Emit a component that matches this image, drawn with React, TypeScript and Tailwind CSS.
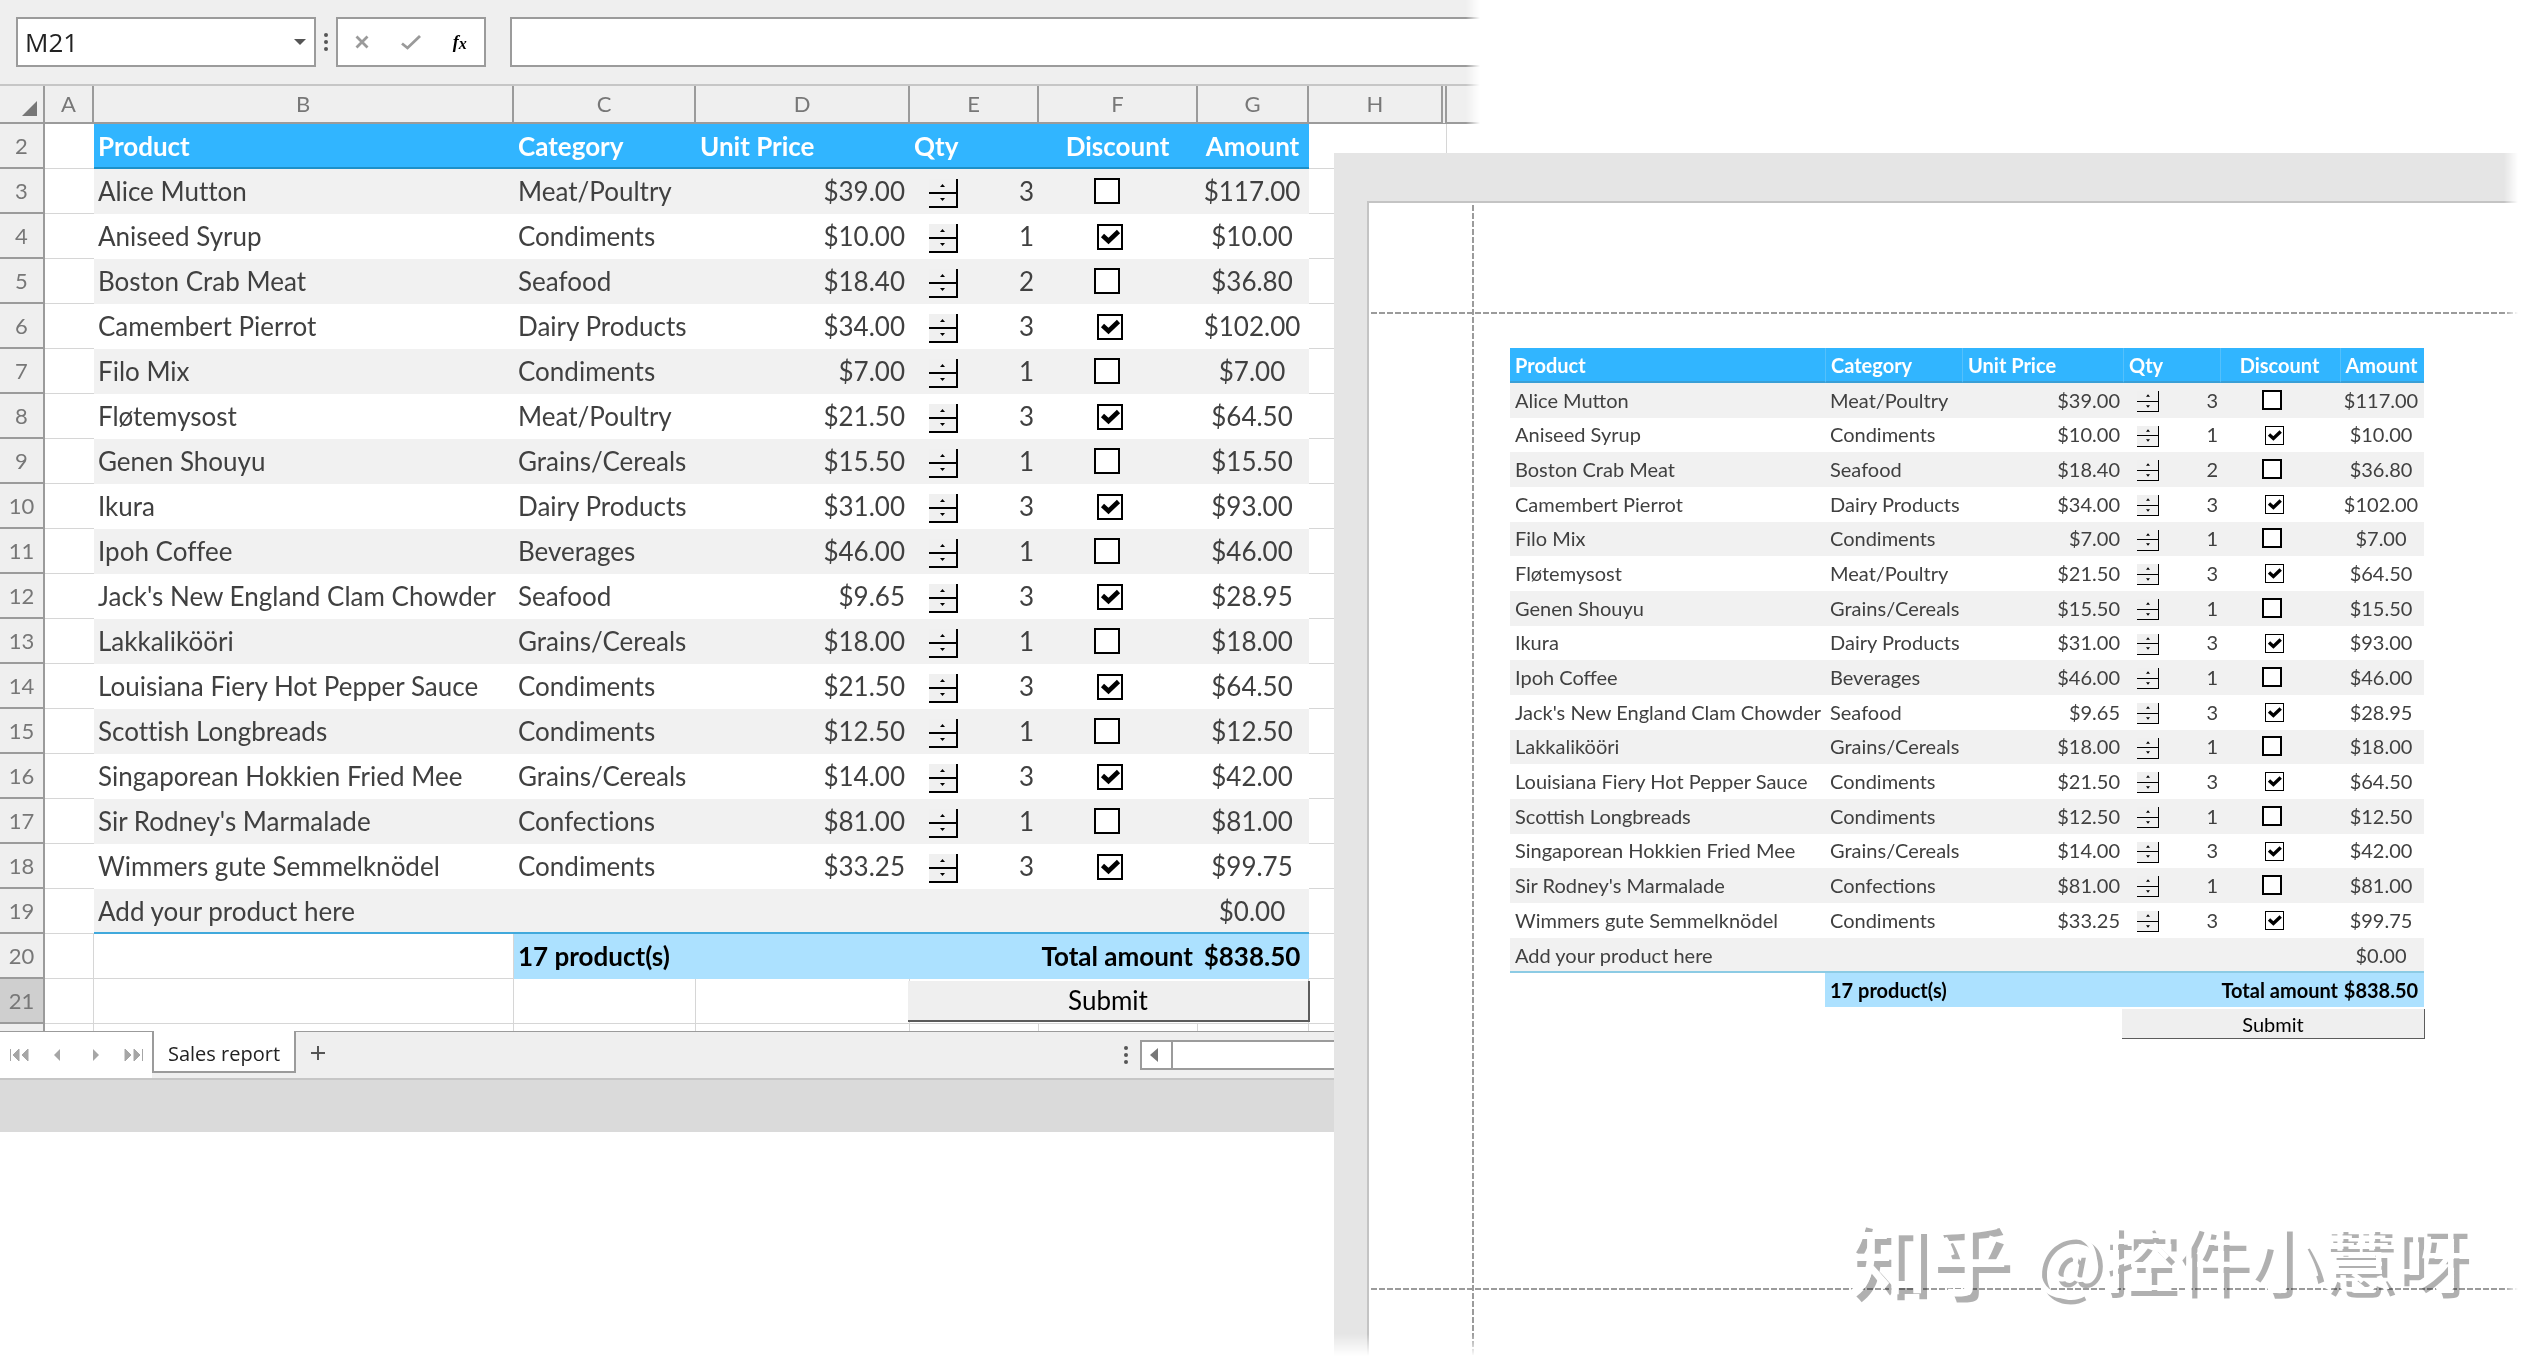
import clsx from "clsx";

type Row = {
  product: string;
  category: string;
  price: string;
  qty: number;
  discount: boolean;
  amount: string;
};

const rows: Row[] = [
  { product: "Alice Mutton", category: "Meat/Poultry", price: "$39.00", qty: 3, discount: false, amount: "$117.00" },
  { product: "Aniseed Syrup", category: "Condiments", price: "$10.00", qty: 1, discount: true, amount: "$10.00" },
  { product: "Boston Crab Meat", category: "Seafood", price: "$18.40", qty: 2, discount: false, amount: "$36.80" },
  { product: "Camembert Pierrot", category: "Dairy Products", price: "$34.00", qty: 3, discount: true, amount: "$102.00" },
  { product: "Filo Mix", category: "Condiments", price: "$7.00", qty: 1, discount: false, amount: "$7.00" },
  { product: "Fløtemysost", category: "Meat/Poultry", price: "$21.50", qty: 3, discount: true, amount: "$64.50" },
  { product: "Genen Shouyu", category: "Grains/Cereals", price: "$15.50", qty: 1, discount: false, amount: "$15.50" },
  { product: "Ikura", category: "Dairy Products", price: "$31.00", qty: 3, discount: true, amount: "$93.00" },
  { product: "Ipoh Coffee", category: "Beverages", price: "$46.00", qty: 1, discount: false, amount: "$46.00" },
  { product: "Jack's New England Clam Chowder", category: "Seafood", price: "$9.65", qty: 3, discount: true, amount: "$28.95" },
  { product: "Lakkalikööri", category: "Grains/Cereals", price: "$18.00", qty: 1, discount: false, amount: "$18.00" },
  { product: "Louisiana Fiery Hot Pepper Sauce", category: "Condiments", price: "$21.50", qty: 3, discount: true, amount: "$64.50" },
  { product: "Scottish Longbreads", category: "Condiments", price: "$12.50", qty: 1, discount: false, amount: "$12.50" },
  { product: "Singaporean Hokkien Fried Mee", category: "Grains/Cereals", price: "$14.00", qty: 3, discount: true, amount: "$42.00" },
  { product: "Sir Rodney's Marmalade", category: "Confections", price: "$81.00", qty: 1, discount: false, amount: "$81.00" },
  { product: "Wimmers gute Semmelknödel", category: "Condiments", price: "$33.25", qty: 3, discount: true, amount: "$99.75" },
];

function Spinner({ name, small }: { name: string; small?: boolean }) {
  return (
    <span
      className={clsx(
        "flex flex-col border-black bg-[#f0f0f0]",
        small ? "mt-1 h-[21px] w-[22px] border-r border-b" : "mt-1.5 h-[29px] w-[29px] border-r-2 border-b-2"
      )}
    >
      <button
        aria-label={`Increase ${name}`}
        className={clsx("flex flex-1 items-center justify-center border-black", small ? "border-b" : "border-b-2")}
      >
        <svg viewBox="0 0 5 3" className={small ? "h-[3px] w-1" : "h-[3px] w-[5px]"}>
          <path d="M0 3L2.5 0L5 3z" />
        </svg>
      </button>
      <button aria-label={`Decrease ${name}`} className="flex flex-1 items-center justify-center">
        <svg viewBox="0 0 5 3" className={small ? "h-[3px] w-1" : "h-[3px] w-[5px]"}>
          <path d="M0 0L2.5 3L5 0z" />
        </svg>
      </button>
    </span>
  );
}

function Discount({ row, small }: { row: Row; small?: boolean }) {
  return (
    <span
      className={clsx(
        "relative block",
        small
          ? row.discount ? "mt-0.5 ml-[45px] size-[19px]" : "ml-[42px] size-5"
          : row.discount ? "mt-0.5 ml-[58px] size-[26px]" : "ml-[55px] size-[26px]"
      )}
    >
      <input
        type="checkbox"
        aria-label={`Discount ${row.product}`}
        defaultChecked={row.discount}
        className={clsx(
          "block size-full appearance-none border-black bg-white",
          small && row.discount ? "border" : "border-2"
        )}
      />
      {row.discount && (
        <svg viewBox="0 0 26 26" className="pointer-events-none absolute inset-0 size-full">
          <path d="M5.5 11.5L11.5 17L21.5 7.5" fill="none" stroke="#000" strokeWidth="4.6" />
        </svg>
      )}
    </span>
  );
}

function Cells({ row, striped, small }: { row: Row; striped: boolean; small?: boolean }) {
  const cell = clsx("pb-0.5", striped ? "bg-[#f1f1f1]" : "bg-white");
  const left = small ? "pl-[5px]" : "pl-1";
  return (
    <>
      <td className={clsx(left, cell)}>{row.product}</td>
      <td className={clsx(left, cell)}>{row.category}</td>
      <td className={clsx("text-right", small ? "pr-[3px]" : "pr-[5px]", cell)}>{row.price}</td>
      <td className={cell}>
        <div className={clsx("flex items-center justify-between", small ? "pr-0.5 pl-3.5" : "pr-[5px] pl-[19px]")}>
          <Spinner name={row.product} small={small} />
          {row.qty}
        </div>
      </td>
      <td className={cell}>
        <Discount row={row} small={small} />
      </td>
      <td className={clsx("text-center", small ? "pr-0.5" : "pr-[3px]", cell)}>{row.amount}</td>
    </>
  );
}

function Heads({ line, left }: { line: string; left: string }) {
  const titles = ["Product", "Category", "Unit Price", "Qty", "Discount", "Amount"];
  return (
    <>
      {titles.map((t, i) => (
        <th
          key={t}
          scope="col"
          className={clsx("border-b-2 bg-[#31b5ff] font-bold text-white", line, i < 4 ? ["text-left", left] : "pr-0.5 text-center")}
        >
          {t}
        </th>
      ))}
    </>
  );
}

function Dots() {
  return (
    <span className="flex w-5 flex-col items-center gap-[3px]">
      <i className="size-1 rounded-full bg-[#555]" />
      <i className="size-1 rounded-full bg-[#555]" />
      <i className="size-1 rounded-full bg-[#555]" />
    </span>
  );
}

function FormulaBar() {
  return (
    <div className="flex h-[86px] items-start border-b-2 border-[#c6c6c6] pt-[17px] pl-4">
      <div className="flex h-[50px] w-[300px] items-center border-2 border-[#9b9b9b] bg-white">
        <input
          aria-label="Name box"
          defaultValue="M21"
          className="min-w-0 flex-1 pl-[7px] font-['Open_Sans',sans-serif] text-[26px] text-[#222] outline-none"
        />
        <button aria-label="Open name list" className="flex h-full w-7 items-center justify-center">
          <svg viewBox="0 0 12 6" className="h-1.5 w-3">
            <path d="M0 0H12L6 6z" fill="#555" />
          </svg>
        </button>
      </div>
      <div className="flex h-[50px] items-center">
        <Dots />
      </div>
      <div className="flex h-[50px] w-[150px] border-2 border-[#9b9b9b] bg-white">
        <button aria-label="Cancel" className="flex flex-1 items-center justify-center">
          <svg viewBox="0 0 14 14" className="size-3.5">
            <path d="M1.5 1.5L12.5 12.5M12.5 1.5L1.5 12.5" stroke="#9a9a9a" strokeWidth="2.8" />
          </svg>
        </button>
        <button aria-label="Enter" className="flex flex-1 items-center justify-center">
          <svg viewBox="0 0 20 15" className="h-[15px] w-5">
            <path d="M1 8.5L6.5 13L19 1" fill="none" stroke="#9a9a9a" strokeWidth="2.8" />
          </svg>
        </button>
        <button
          aria-label="Insert function"
          className="flex flex-1 items-center justify-center font-['Liberation_Serif',serif] text-[18px] leading-none font-bold text-black italic"
        >
          f<span className="pt-1 text-[16px]">x</span>
        </button>
      </div>
      <input aria-label="Formula" className="ml-6 h-[50px] min-w-0 flex-1 border-2 border-r-0 border-[#9b9b9b] bg-white outline-none" />
    </div>
  );
}

function RowHead({ n, active }: { n?: number; active?: boolean }) {
  return (
    <th
      scope="row"
      className={clsx(
        "border-r-2 border-[#9b9b9b] text-center text-[22px] font-normal text-[#777]",
        n && "border-b-2",
        active ? "bg-[#cfcfcf]" : "bg-[#efefef]"
      )}
    >
      {n}
    </th>
  );
}

const gridLine = "border-b border-[#d6d6d6]";
const gridCell = "border-r border-b border-[#d6d6d6]";

function SheetTable() {
  return (
    <table className="w-full table-fixed border-separate border-spacing-0 bg-white text-[26px] leading-8 whitespace-nowrap text-[#404040] [font-variant-ligatures:none]">
      <colgroup>
        <col className="w-[45px]" />
        <col className="w-[49px]" />
        <col className="w-[420px]" />
        <col className="w-[182px]" />
        <col className="w-[214px]" />
        <col className="w-[129px]" />
        <col className="w-[159px]" />
        <col className="w-[111px]" />
        <col className="w-[138px]" />
        <col />
      </colgroup>
      <thead>
        <tr className="h-[38px] bg-[#efefef] text-[22px] leading-7 text-[#777]">
          <th className="border-r-2 border-b-2 border-[#9b9b9b]">
            <svg viewBox="0 0 15 15" className="mt-2 ml-auto mr-1.5 size-[15px]">
              <path d="M15 0V15H0z" fill="#777" />
            </svg>
          </th>
          {"ABCDEFG".split("").map((c) => (
            <th key={c} scope="col" className="border-r-2 border-b-2 border-[#9b9b9b] font-normal">
              {c}
            </th>
          ))}
          <th scope="col" className="border-r-6 border-b-2 border-[#9b9b9b] font-normal [border-right-style:double]">
            H
          </th>
          <th className="border-b-2 border-[#9b9b9b]" />
        </tr>
      </thead>
      <tbody>
        <tr className="h-[45px]">
          <RowHead n={2} />
          <td className={gridLine} />
          <Heads line="border-[#1d90c8]" left="pl-1" />
          <td className={gridCell} />
          <td />
        </tr>
        {rows.map((row, i) => (
          <tr key={row.product} className="h-[45px]">
            <RowHead n={i + 3} />
            <td className={gridLine} />
            <Cells row={row} striped={i % 2 === 0} />
            <td className={gridCell} />
            <td />
          </tr>
        ))}
        <tr className="h-[45px]">
          <RowHead n={19} />
          <td className={gridLine} />
          <td className="border-b-2 border-[#41a9dc] bg-[#f1f1f1] pl-1" colSpan={5}>
            Add your product here
          </td>
          <td className="border-b-2 border-[#41a9dc] bg-[#f1f1f1] pr-[3px] text-center">$0.00</td>
          <td className={gridCell} />
          <td />
        </tr>
        <tr className="h-[45px] font-bold text-black">
          <RowHead n={20} />
          <td className={gridCell} />
          <td className={gridCell} />
          <td className="bg-[#ace1ff] pb-0.5 pl-1" colSpan={2}>
            17 product(s)
          </td>
          <td className="bg-[#ace1ff] pr-[5px] pb-0.5 text-right" colSpan={2}>
            Total amount
          </td>
          <td className="bg-[#ace1ff] pr-[3px] pb-0.5 text-center">$838.50</td>
          <td className={gridCell} />
          <td />
        </tr>
        <tr className="h-[45px]">
          <RowHead n={21} active />
          <td className={gridCell} />
          <td className={gridCell} />
          <td className={gridCell} />
          <td className={gridCell} />
          <td className={gridCell} colSpan={3}>
            <button className="-mx-0.5 block h-[41px] w-[calc(100%+4px)] border-r-2 border-b-2 border-[#5c5c5c] bg-[#efefef] text-black">
              Submit
            </button>
          </td>
          <td className={gridCell} />
          <td />
        </tr>
        <tr className="h-[7px]">
          <RowHead />
          {[1, 2, 3, 4, 5, 6, 7, 8].map((n) => (
            <td key={n} className="border-r border-[#d6d6d6]" />
          ))}
          <td />
        </tr>
      </tbody>
    </table>
  );
}

function TabBar() {
  const nav = [
    { label: "First sheet", d: "M1.5 0V12M10 0V12L4 6zM19 0V12L13 6z" },
    { label: "Previous sheet", d: "M13 0V12L7 6z" },
    { label: "Next sheet", d: "M8 0V12L14 6z" },
    { label: "Last sheet", d: "M19.5 0V12M11 0V12L17 6zM2 0V12L8 6z" },
  ];
  return (
    <div className="flex h-[49px] border-b-2 border-[#c6c6c6] bg-[#efefef]">
      <nav className="flex w-[152px] border-t border-[#9b9b9b] bg-white">
        {nav.map((b, i) => (
          <button key={b.label} aria-label={b.label} className="flex flex-1 items-center justify-center">
            <svg viewBox="0 0 20 12" className="h-3 w-5 overflow-visible">
              <path d={b.d} fill="#a6a6a6" stroke={i % 3 === 0 ? "#a6a6a6" : "none"} />
            </svg>
          </button>
        ))}
      </nav>
      <button className="h-[42px] w-[144px] border-x-2 border-b-2 border-[#9b9b9b] bg-white pt-1.5 font-['Open_Sans',sans-serif] text-[20px] text-[#222]">
        Sales report
      </button>
      <div className="flex flex-1 border-t border-[#9b9b9b]">
        <button aria-label="Add sheet" className="flex h-[42px] w-11 items-center justify-center">
          <svg viewBox="0 0 14 14" className="size-3.5">
            <path d="M7 0V14M0 7H14" stroke="#555" strokeWidth="2" />
          </svg>
        </button>
        <div className="ml-auto flex w-[364px] items-center">
          <Dots />
          <div className="ml-1 flex h-[30px] flex-1 border-2 border-r-0 border-[#9b9b9b] bg-white">
            <button aria-label="Scroll left" className="flex w-[31px] items-center justify-center border-r-2 border-[#9b9b9b] pr-1.5">
              <svg viewBox="0 0 8 14" className="h-3.5 w-2">
                <path d="M8 0V14L0 7z" fill="#777" />
              </svg>
            </button>
          </div>
        </div>
      </div>
    </div>
  );
}

function PreviewTable() {
  return (
    <table className="w-[914px] table-fixed border-separate border-spacing-0 text-[20px] leading-6 whitespace-nowrap text-[#404040]">
      <colgroup>
        <col className="w-[315px]" />
        <col className="w-[137px]" />
        <col className="w-[161px]" />
        <col className="w-[97px]" />
        <col className="w-[120px]" />
        <col className="w-[84px]" />
      </colgroup>
      <thead>
        <tr className="h-[35px]">
          <Heads line="border-b-[#3a9fd6] not-first:border-l not-first:border-l-[#55c0fb]" left="pl-[5px]" />
        </tr>
      </thead>
      <tbody>
        {rows.map((row, i) => (
          <tr key={row.product} className={i % 3 === 1 ? "h-[34px]" : "h-[35px]"}>
            <Cells row={row} striped={i % 2 === 0} small />
          </tr>
        ))}
        <tr className="h-[35px] bg-[#f1f1f1]">
          <td className="border-b-2 border-[#8ccbe4] pl-[5px]" colSpan={5}>
            Add your product here
          </td>
          <td className="border-b-2 border-[#8ccbe4] pr-0.5 text-center">$0.00</td>
        </tr>
        <tr className="h-[34px] font-bold text-black">
          <td />
          <td className="bg-[#ace1ff] pl-[5px]" colSpan={2}>
            17 product(s)
          </td>
          <td className="bg-[#ace1ff] pr-0.5 text-right" colSpan={2}>
            Total amount
          </td>
          <td className="bg-[#ace1ff] pr-0.5 text-center">$838.50</td>
        </tr>
        <tr>
          <td colSpan={3} />
          <td colSpan={3} className="pt-0.5">
            <button className="-mx-px block h-[30px] w-[calc(100%+2px)] border-r border-b border-[#5c5c5c] bg-[#efefef] text-black">
              Submit
            </button>
          </td>
        </tr>
      </tbody>
    </table>
  );
}

const dashX = "bg-[repeating-linear-gradient(to_right,#9b9b9b_0_6px,transparent_6px_8px)]";
const dashY = "bg-[repeating-linear-gradient(to_bottom,#9b9b9b_0_6px,transparent_6px_8px)]";

function PrintPreview() {
  return (
    <section className="col-start-1 row-start-1 mt-[153px] ml-[1334px] flex bg-[#e5e5e5] pt-12 pl-[33px] [mask-composite:intersect] [mask-image:linear-gradient(to_right,black_calc(100%-30px),transparent_calc(100%-16px)),linear-gradient(to_top,transparent_8px,black_30px)]">
      <div className="relative flex-1 border-t-2 border-l-2 border-[#c4c4c4] bg-white pt-[145px] pb-40 pl-[141px]">
        {/* margin guides */}
        <span className={clsx("absolute top-[109px] right-0 left-0.5 h-0.5", dashX)} />
        <span className={clsx("absolute right-0 bottom-[74px] left-0.5 h-0.5", dashX)} />
        <span className={clsx("absolute top-0.5 bottom-0 left-[103px] w-0.5", dashY)} />
        <PreviewTable />
        <p className="absolute right-[68px] bottom-[58px] flex items-center gap-6 font-['Noto_Sans_CJK_SC',sans-serif] text-[73px] leading-[104px] whitespace-nowrap text-white [text-shadow:6px_6px_0_rgba(0,0,0,0.31)]">
          <span className="text-[80px] font-medium">知乎</span>
          <span>@控件小慧呀</span>
        </p>
      </div>
    </section>
  );
}

export default function App() {
  return (
    <main className="grid min-h-screen grid-cols-1 overflow-hidden bg-white font-[Lato,sans-serif]">
      <section className="col-start-1 row-start-1 w-full max-w-[1480px] self-start bg-[#efefef] [mask-image:linear-gradient(to_right,black_calc(100%-14px),transparent)]">
        <FormulaBar />
        <SheetTable />
        <TabBar />
        <div className="h-[52px] bg-[#dadada]" />
      </section>
      <PrintPreview />
    </main>
  );
}
